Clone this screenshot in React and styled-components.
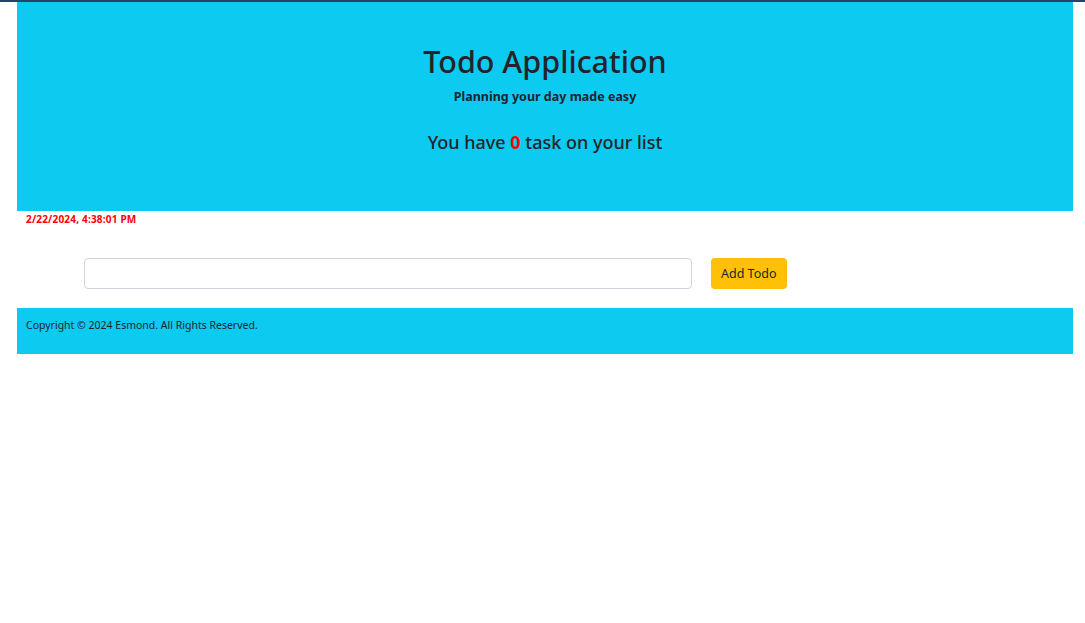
import styled, { createGlobalStyle } from "styled-components";

const GlobalStyle = createGlobalStyle`
  body {
    margin: 0;
    font-family: "Noto Sans", "Open Sans", sans-serif;
    color: #212529;
    background: #fff;
    border-top: 2px solid #24446e;
  }
`;

const Page = styled.div`
  width: 1056px;
  margin-left: 17px;
`;

const Header = styled.header`
  background: #0dcaf0;
  height: 209px;
  display: flex;
  flex-direction: column;
  align-items: center;
  padding-top: 40px;
  box-sizing: border-box;
`;

const Title = styled.h1`
  margin: 0;
  font-size: 30.5px;
  font-weight: 500;
  line-height: 38px;
`;

const Subtitle = styled.p`
  margin: 8px 0 0;
  font-size: 12.5px;
  font-weight: 700;
`;

const Count = styled.h3`
  margin: 25px 0 0;
  font-size: 18px;
  font-weight: 500;
`;

const Zero = styled.span`
  color: #ff0000;
  font-weight: 700;
`;

const Stamp = styled.div`
  color: #ff0000;
  font-size: 10px;
  font-weight: 700;
  letter-spacing: 0.2px;
  padding: 1px 0 0 9px;
  height: 15px;
`;

const Form = styled.form`
  display: flex;
  align-items: center;
  gap: 19px;
  padding: 31px 0 19px 67px;
`;

const Input = styled.input`
  width: 608px;
  height: 31px;
  box-sizing: border-box;
  border: 1px solid #ced4da;
  border-radius: 4px;
  outline: none;
  padding: 4px 10px;
  font-family: inherit;
`;

const Button = styled.button`
  height: 31px;
  padding: 0 10px;
  border: none;
  border-radius: 4px;
  background: #ffc107;
  color: #212529;
  font-family: inherit;
  font-size: 12.5px;
  cursor: pointer;
`;

const Footer = styled.footer`
  background: #0dcaf0;
  height: 46px;
  padding: 10px 0 0 9px;
  box-sizing: border-box;
  font-size: 10.5px;
`;

export default function App() {
  return (
    <>
      <GlobalStyle />
      <Page>
        <Header>
          <Title>Todo Application</Title>
          <Subtitle>Planning your day made easy</Subtitle>
          <Count>
            You have <Zero>0</Zero> task on your list
          </Count>
        </Header>
        <Stamp>2/22/2024, 4:38:01 PM</Stamp>
        <Form onSubmit={(e) => e.preventDefault()}>
          <Input type="text" />
          <Button type="submit">Add Todo</Button>
        </Form>
        <Footer>Copyright © 2024 Esmond. All Rights Reserved.</Footer>
      </Page>
    </>
  );
}
